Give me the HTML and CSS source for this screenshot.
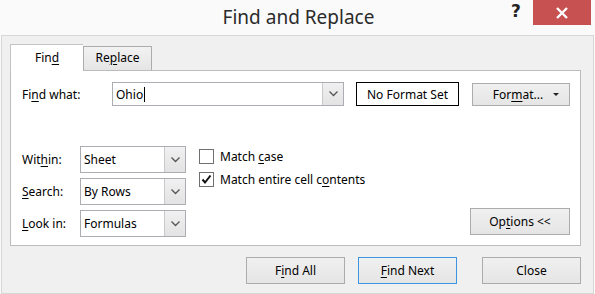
FILE: index.html
```html
<!DOCTYPE html>
<html>
<head>
    <title>Find and Replace</title>
    <link rel="stylesheet" href="styles.css">
</head>
<body>

<div class="titlebar">
    <div class="title">Find and Replace</div>
    <div class="help">?</div>
    <div class="close">
        <svg width="14" height="12" viewBox="0 0 14 12">
            <path d="M2 1 L12 11 M12 1 L2 11" stroke="#fff" stroke-width="2.4" fill="none"/>
        </svg>
    </div>
</div>

<div class="frame">

    <div class="tabs">
        <div class="tab active">Fin<u>d</u></div>
        <div class="tab">Re<u>p</u>lace</div>
    </div>

    <div class="panel">
        <div class="find-row">
            <div class="label wide">Fi<u>n</u>d what:</div>
            <div class="combo find-input">
                <div class="combo-text">Ohio<span class="caret"></span></div>
                <div class="combo-btn">
                    <svg width="9" height="6" viewBox="0 0 9 6"><path d="M0.5 0.5 L4.5 4.5 L8.5 0.5" stroke="#555" stroke-width="1.3" fill="none"/></svg>
                </div>
            </div>
            <div class="format-set">No Format Set</div>
            <div class="button format-btn">
                <span>For<u>m</u>at...</span>
                <span class="tri"></span>
            </div>
        </div>

        <div class="options">
            <div class="selects">
                <div class="select-row">
                    <div class="label">Wit<u>h</u>in:</div>
                    <div class="combo select">
                        <div class="combo-text">Sheet</div>
                        <div class="combo-btn">
                            <svg width="9" height="6" viewBox="0 0 9 6"><path d="M0.5 0.5 L4.5 4.5 L8.5 0.5" stroke="#555" stroke-width="1.3" fill="none"/></svg>
                        </div>
                    </div>
                </div>
                <div class="select-row">
                    <div class="label"><u>S</u>earch:</div>
                    <div class="combo select">
                        <div class="combo-text">By Rows</div>
                        <div class="combo-btn">
                            <svg width="9" height="6" viewBox="0 0 9 6"><path d="M0.5 0.5 L4.5 4.5 L8.5 0.5" stroke="#555" stroke-width="1.3" fill="none"/></svg>
                        </div>
                    </div>
                </div>
                <div class="select-row">
                    <div class="label"><u>L</u>ook in:</div>
                    <div class="combo select">
                        <div class="combo-text">Formulas</div>
                        <div class="combo-btn">
                            <svg width="9" height="6" viewBox="0 0 9 6"><path d="M0.5 0.5 L4.5 4.5 L8.5 0.5" stroke="#555" stroke-width="1.3" fill="none"/></svg>
                        </div>
                    </div>
                </div>
            </div>

            <div class="checks">
                <div class="check-row">
                    <div class="checkbox"></div>
                    <div>Match <u>c</u>ase</div>
                </div>
                <div class="check-row">
                    <div class="checkbox">
                        <svg width="13" height="13" viewBox="0 0 13 13"><path d="M2.5 6.5 L5 9.5 L10.5 2.5" stroke="#111" stroke-width="2" fill="none"/></svg>
                    </div>
                    <div>Match entire cell c<u>o</u>ntents</div>
                </div>
            </div>

            <div class="button options-btn">Op<u>t</u>ions &lt;&lt;</div>
        </div>
    </div>

    <div class="actions">
        <div class="button action">F<u>i</u>nd All</div>
        <div class="button action default"><u>F</u>ind Next</div>
        <div class="button action close-btn">Close</div>
    </div>

</div>

</body>
</html>
```

FILE: styles.css
```css
body {
    margin: 0;
    padding: 0;
    background-color: #fafafa;
    font-family: 'Noto Sans', 'Open Sans', sans-serif;
    font-size: 12px;
    color: #000;
    width: 595px;
    height: 294px;
    overflow: hidden;
}

u {
    text-decoration-thickness: 1px;
    text-underline-offset: 2px;
}

/* title bar */

.titlebar {
    height: 35px;
    display: flex;
    align-items: flex-start;
}

.title {
    flex-grow: 1;
    text-align: center;
    font-size: 19px;
    color: #2b2b2b;
    padding-top: 4px;
    padding-left: 86px;
}

.help {
    width: 10px;
    margin-top: 1px;
    margin-right: 12px;
    font-family: 'DejaVu Sans', sans-serif;
    font-weight: bold;
    font-size: 17px;
    color: #222;
}

.close {
    width: 58px;
    height: 25px;
    margin-right: 4px;
    background-color: #c75050;
    display: flex;
    align-items: center;
    justify-content: center;
}

/* dialog body */

.frame {
    margin-left: 1px;
    width: 593px;
    height: 259px;
    box-sizing: border-box;
    border: 1px solid #d7d7d7;
    background-color: #f0f0f0;
    padding: 8px 0 0 8px;
}

.tabs {
    display: flex;
    align-items: flex-end;
    height: 26px;
}

.tab {
    box-sizing: border-box;
    height: 24px;
    width: 69px;
    border: 1px solid #acacac;
    border-bottom: none;
    background: linear-gradient(#f2f2f2, #e5e5e5);
    text-align: center;
    line-height: 22px;
}

.tab.active {
    position: relative;
    z-index: 1;
    height: 27px;
    width: 73px;
    margin-bottom: -1px;
    background: #fff;
    border-color: #c4c4c4;
    border-right: none;
    line-height: 25px;
    padding-bottom: 2px;
}

.panel {
    box-sizing: border-box;
    width: 571px;
    height: 176px;
    background-color: #fff;
    border: 1px solid #bcbcbc;
    padding: 11px 0 0 11px;
}

.find-row {
    display: flex;
    align-items: center;
    height: 24px;
}

.label {
    width: 58px;
}

.label.wide {
    width: 90px;
}

.combo {
    box-sizing: border-box;
    display: flex;
    border: 1px solid #abadb3;
    background-color: #fff;
}

.combo-text {
    flex-grow: 1;
    padding-left: 3px;
    display: flex;
    align-items: center;
}

.combo-btn {
    width: 20px;
    background: linear-gradient(#f0f0f0, #e3e3e3);
    border-left: 1px solid #c9c9c9;
    display: flex;
    align-items: center;
    justify-content: center;
}

.find-input {
    width: 232px;
    height: 24px;
}

.caret {
    display: inline-block;
    width: 1px;
    height: 15px;
    background-color: #000;
    margin-left: 1px;
}

.format-set {
    box-sizing: border-box;
    width: 103px;
    height: 24px;
    margin-left: 12px;
    border: 1px solid #000;
    display: flex;
    align-items: center;
    justify-content: center;
}

.button {
    box-sizing: border-box;
    border: 1px solid #acacac;
    background: linear-gradient(#f0f0f0, #e5e5e5);
    display: flex;
    align-items: center;
    justify-content: center;
}

.format-btn {
    width: 98px;
    height: 23px;
    margin-left: 13px;
    gap: 10px;
    padding-left: 10px;
}

.tri {
    width: 0;
    height: 0;
    border-left: 3px solid transparent;
    border-right: 3px solid transparent;
    border-top: 3px solid #222;
}

.options {
    display: flex;
    margin-top: 40px;
}

.selects {
    display: flex;
    flex-direction: column;
    gap: 5px;
}

.select-row {
    display: flex;
    align-items: center;
}

.select {
    width: 106px;
    height: 27px;
}

.checks {
    display: flex;
    flex-direction: column;
    gap: 8px;
    margin-left: 13px;
    padding-top: 3px;
}

.check-row {
    display: flex;
    align-items: center;
    gap: 6px;
    height: 15px;
}

.checkbox {
    box-sizing: border-box;
    width: 15px;
    height: 15px;
    border: 1px solid #707070;
    background-color: #fff;
    display: flex;
    align-items: center;
    justify-content: center;
}

.options-btn {
    width: 100px;
    height: 27px;
    margin-left: auto;
    margin-right: 10px;
    align-self: flex-end;
    margin-bottom: 2px;
}

/* bottom buttons */

.actions {
    display: flex;
    margin-top: 11px;
    padding-left: 236px;
}

.action {
    width: 99px;
    height: 27px;
}

.action.default {
    margin-left: 13px;
    border-color: #3c95e0;
}

.action.close-btn {
    margin-left: 25px;
}
```
